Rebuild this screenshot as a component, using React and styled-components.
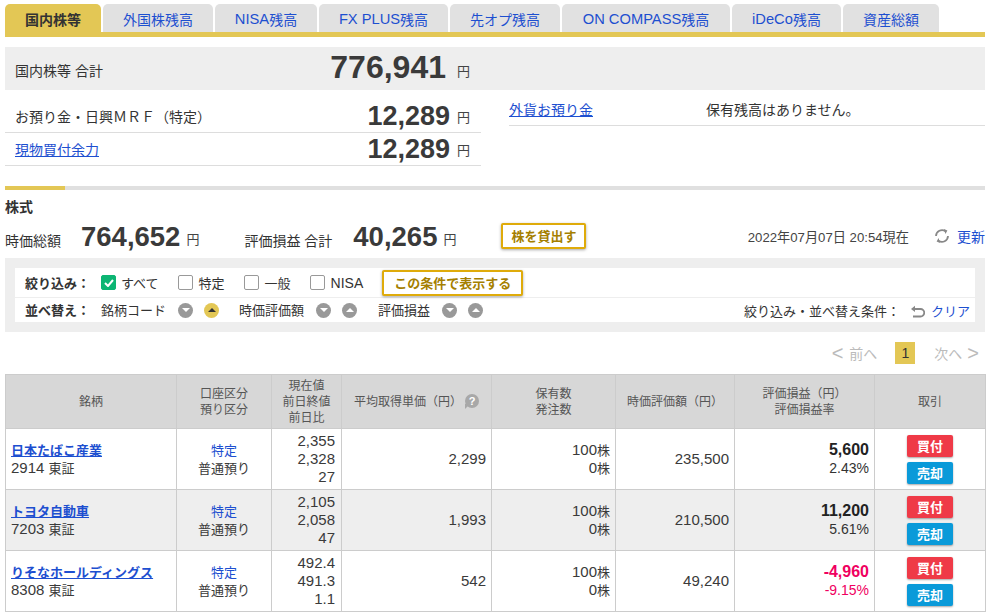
import React from "react";
import styled, { createGlobalStyle } from "styled-components";

const Global = createGlobalStyle`
  html, body { margin: 0; padding: 0; background: #fff; overflow: hidden; height: 616px; }
  body { font-family: "Liberation Sans", "Noto Sans CJK JP", sans-serif; font-size: 14px; color: #333; }
  * { box-sizing: border-box; }
`;

const Page = styled.div`
  width: 992px; height: 616px; overflow: hidden; padding: 4px 7px 0 5px;
`;

const TabBar = styled.nav`
  display: flex; gap: 2px; height: 33px; border-bottom: 5px solid #e3c755;
`;
const Tab = styled.a`
  display: flex; align-items: center; justify-content: center;
  width: ${p => p.$w}px; height: 28px; border-radius: 5px 5px 0 0;
  font-size: 14px; padding-top: 1px;
  background: ${p => (p.$active ? "#e3c755" : "#e1e1e1")};
  color: ${p => (p.$active ? "#333" : "#1d4fd0")};
  font-weight: ${p => (p.$active ? 700 : 400)};
`;
const TabLatin = styled.span`font-size: 14.7px;`;

const TotalBand = styled.section`
  display: flex; align-items: center; height: 43px; margin-top: 10px; padding: 0 515px 4px 10px;
  background: #eee;
`;
const Grow = styled.div`flex: 1;`;
const Amount = styled.b`
  font-size: ${p => p.$size || 27}px; font-weight: 700; color: #3a3a3a; line-height: 1;
`;
const Yen = styled.span`
  font-size: 13px; margin-left: ${p => p.$gap || 7}px; padding-top: ${p => p.$drop}px; line-height: 18px; color: #444;
`;
const TotalLabel = styled.span`font-size: 14px; padding-top: 6px;`;
const AmountGroup = styled.div`display: flex; align-items: center;`;

const Balances = styled.div`
  display: flex; gap: 28px; height: 96px;
`;
const BalanceCol = styled.div`width: 476px; padding-top: 10px;`;
const BalanceRow = styled.div`
  display: flex; align-items: center; justify-content: space-between;
  height: 33px; padding: 0 11px 0 10px; border-bottom: 1px solid #ddd;
`;
const ForeignRow = styled.div`
  display: flex; align-items: center; height: 27px; border-bottom: 1px solid #ddd; margin-top: -1px; padding-bottom: 6px;
`;
const TextLink = styled.a`color: #1d4fd0; text-decoration: underline;`;
const ForeignLabel = styled.div`width: 197px;`;

const SectionRule = styled.div`
  height: 4px; background: #e0e0e0;
  &::before { content: ""; display: block; width: 60px; height: 4px; background: #e3c755; }
`;
const SectionTitle = styled.h2`
  margin: 9px 0 0; font-size: 14px; line-height: 16px; font-weight: 700; color: #333;
`;
const Summary = styled.div`
  display: flex; align-items: center; height: 28px; margin-top: 8px;
`;
const SummaryLabel = styled.span`font-size: 14px; margin-left: ${p => p.$before || 0}px; margin-right: ${p => p.$after}px; padding-top: 6px;`;
const GoldButton = styled.button`
  display: inline-flex; align-items: center; justify-content: center;
  width: ${p => p.$w}px; height: 26px; padding: 0; flex: none;
  margin-left: ${p => p.$before || 0}px; margin-top: ${p => (p.$lift ? -3 : 0)}px;
  background: #fff; border: 2px solid #dfab0a; border-radius: 2px;
  box-shadow: 0 1px 3px rgba(0,0,0,.35);
  color: #a57f00; font: 700 13px "Liberation Sans", "Noto Sans CJK JP", sans-serif;
`;
const Stamp = styled.span`font-size: 13.2px; color: #444; margin-left: auto; margin-right: 25px; position: relative; top: -1px;`;
const Refresh = styled.a`display: flex; align-items: center; gap: 7px; color: #1d4fd0; font-size: 14px; position: relative; top: -1px;`;

const FilterPanel = styled.section`
  margin-top: 7px; padding: 10px; height: 74px; background: #eee;
`;
const FilterInner = styled.div`background: #fff; height: 54px;`;
const FilterRow = styled.div`
  display: flex; align-items: center; height: ${p => p.$h}px; padding: 0 5px 0 10px;
  font-size: 13px;
  ${p => p.$top && "border-bottom: 1px solid #eee;"}
`;
const FilterLabel = styled.b`
  width: 76px; font-weight: 700; font-size: 13px; flex: none; position: relative; top: ${p => (p.$lift ? -1 : 0)}px;
`;
const Check = styled.label`
  display: flex; align-items: center; gap: ${p => (p.$first ? 5 : 6)}px; margin-right: 19px;
`;
const CheckLatin = styled.span`font-size: 14px;`;
const Box = styled.span`
  display: flex; align-items: center; justify-content: center;
  width: 15px; height: 15px; border-radius: 2px;
  background: ${p => (p.$on ? "#0cb573" : "#fff")};
  border: 1px solid ${p => (p.$on ? "#0cb573" : "#999")};
`;
const SortName = styled.span`margin-right: 12px; position: relative; top: -1px;`;
const SortDot = styled.span`
  display: flex; align-items: center; justify-content: center; flex: none;
  width: 15px; height: 15px; border-radius: 50%; margin-right: ${p => p.$gap}px;
  background: ${p => (p.$on ? "#e3c755" : "#999")};
  &::after {
    content: ""; width: 0; height: 0; border-left: 4px solid transparent; border-right: 4px solid transparent;
    ${p => p.$up
      ? `border-bottom: 4px solid ${p.$on ? "#333" : "#fff"};`
      : "border-top: 4px solid #fff;"}
  }
`;
const ClearWrap = styled.div`
  margin-left: auto; display: flex; align-items: center;
`;
const ClearLabel = styled.span`margin-right: 10px;`;
const UndoSlot = styled.span`display: flex; margin: 3px 6px 0 0;`;
const BlueText = styled.a`color: #1d4fd0;`;

const Pager = styled.div`
  display: flex; align-items: center; justify-content: flex-end; height: 22px; margin-top: 10px;
  padding-right: 6px; color: #bbb; font-size: 14px;
`;
const Chevron = styled.span`
  font-size: 20px; font-weight: 400; line-height: 1; margin: ${p => (p.$next ? "0 0 0 5px" : "0 6px 0 0")};
`;
const PageNo = styled.span`
  display: flex; align-items: center; justify-content: center; width: 20px; height: 22px;
  margin: 0 19px 0 18px; background: #e3c755; color: #333;
`;

const Table = styled.table`
  width: 980px; margin-top: 10px; border-collapse: collapse; table-layout: fixed;
`;
const Th = styled.th`
  height: 54px; padding: 0; border: 1px solid #ccc; background: #d7d7d7;
  font-size: 12px; font-weight: 400; line-height: 16px; color: #555; text-align: center;
`;
const Row = styled.tr`background: ${p => (p.$alt ? "#eee" : "#fff")};`;
const Td = styled.td`
  height: 61px; padding: 0 ${p => p.$pr || 5}px 0 5px; border: 1px solid #ccc;
  text-align: ${p => p.$align || "right"}; font-size: 15px; color: #3a3a3a;
  vertical-align: middle;
`;
const Line = styled.div`height: 18px; line-height: 18px; white-space: nowrap;`;
const Ja = styled.span`font-size: 13px;`;
const StockName = styled.a`color: #1d4fd0; font-size: 13px; font-weight: 700; text-decoration: underline;`;
const Kind = styled.span`color: #1d4fd0; font-size: 13px;`;
const Gain = styled.b`
  font-weight: 700; font-size: 16px; color: ${p => (p.$neg ? "#f0005f" : "#222")};
`;
const Rate = styled.span`font-size: 14px; color: ${p => (p.$neg ? "#f0005f" : "#333")};`;
const Trade = styled.button`
  display: block; width: 46px; height: 22px; margin: 0 auto; padding: 0; border: 0; border-radius: 2px;
  background: ${p => (p.$sell ? "#0a9ad9" : "#ef3a47")}; color: #fff;
  box-shadow: 0 1px 2px rgba(0,0,0,.35);
  font: 700 13px "Liberation Sans", "Noto Sans CJK JP", sans-serif;
  & + & { margin-top: 5px; }
`;
const HelpBadge = styled.span`
  display: inline-flex; align-items: center; justify-content: center; position: relative;
  width: 14px; height: 14px; margin-left: 3px; border-radius: 50%;
  background: #a8a8a8; color: #fff; font-size: 11px; font-weight: 700; vertical-align: 1px;
  &::after { content: ""; position: absolute; left: 0; bottom: -1px; width: 0; height: 0;
    border-top: 5px solid #a8a8a8; border-right: 5px solid transparent; }
`;

const tabs = [
  [<>国内株等</>, 96, true], [<>外国株残高</>, 110], [<><TabLatin>NISA</TabLatin>残高</>, 102], [<><TabLatin>FX PLUS</TabLatin>残高</>, 129],
  [<>先オプ残高</>, 110], [<><TabLatin>ON COMPASS</TabLatin>残高</>, 168], [<><TabLatin>iDeCo</TabLatin>残高</>, 109], [<>資産総額</>, 96],
];
const stocks = [
  { name: "日本たばこ産業", code: "2914", p: ["2,355", "2,328", "27"], avg: "2,299", val: "235,500", gain: "5,600", rate: "2.43%" },
  { name: "トヨタ自動車", code: "7203", p: ["2,105", "2,058", "47"], avg: "1,993", val: "210,500", gain: "11,200", rate: "5.61%", alt: true },
  { name: "りそなホールディングス", code: "8308", p: ["492.4", "491.3", "1.1"], avg: "542", val: "49,240", gain: "-4,960", rate: "-9.15%", neg: true },
];

const RefreshIcon = () => (
  <svg width="16" height="16" viewBox="0 0 16 16" fill="none" stroke="#888" strokeWidth="1.8">
    <path d="M2 8a6 6 0 0 1 9.5-4.7" />
    <path d="M14 8a6 6 0 0 1-9.5 4.7" />
    <path d="M10 1l3.4 1.4L11.4 6z" fill="#888" stroke="none" />
    <path d="M6 15l-3.4-1.4L4.6 10z" fill="#888" stroke="none" />
  </svg>
);
const UndoIcon = () => (
  <svg width="15" height="14" viewBox="0 0 15 14" fill="none" stroke="#888" strokeWidth="1.8">
    <path d="M3 4h7.5a3.6 3.6 0 0 1 0 7.5H3" />
    <path d="M5 0.8L1 4l4 3z" fill="#888" stroke="none" />
  </svg>
);

export default function App() {
  return (
    <Page>
      <Global />
      <TabBar>
        {tabs.map(([t, w, a], i) => <Tab key={i} $w={w} $active={a}>{t}</Tab>)}
      </TabBar>

      <TotalBand>
        <TotalLabel>国内株等 合計</TotalLabel>
        <Grow />
        <AmountGroup><Amount $size={32}>776,941</Amount><Yen $gap={11} $drop={10}>円</Yen></AmountGroup>
      </TotalBand>

      <Balances>
        <BalanceCol>
          <BalanceRow>
            <span>お預り金・日興ＭＲＦ（特定）</span>
            <AmountGroup><Amount>12,289</Amount><Yen $drop={4}>円</Yen></AmountGroup>
          </BalanceRow>
          <BalanceRow>
            <TextLink>現物買付余力</TextLink>
            <AmountGroup><Amount>12,289</Amount><Yen $drop={4}>円</Yen></AmountGroup>
          </BalanceRow>
        </BalanceCol>
        <BalanceCol>
          <ForeignRow>
            <ForeignLabel><TextLink>外貨お預り金</TextLink></ForeignLabel>
            <span>保有残高はありません。</span>
          </ForeignRow>
        </BalanceCol>
      </Balances>

      <SectionRule />
      <SectionTitle>株式</SectionTitle>
      <Summary>
        <SummaryLabel $after={20}>時価総額</SummaryLabel>
        <AmountGroup><Amount $size={27.5}>764,652</Amount><Yen $gap={6} $drop={6}>円</Yen></AmountGroup>
        <SummaryLabel $before={45} $after={21}>評価損益 合計</SummaryLabel>
        <AmountGroup><Amount $size={27.5}>40,265</Amount><Yen $gap={6} $drop={6}>円</Yen></AmountGroup>
        <GoldButton $w={85} $before={45} $lift>株を貸出す</GoldButton>
        <Stamp>2022年07月07日 20:54現在</Stamp>
        <Refresh><RefreshIcon />更新</Refresh>
      </Summary>

      <FilterPanel>
        <FilterInner>
          <FilterRow $h={30} $top>
            <FilterLabel>絞り込み：</FilterLabel>
            <Check $first>
              <Box $on>
                <svg width="10" height="8" viewBox="0 0 10 8" fill="none" stroke="#fff" strokeWidth="2"><path d="M1 4l3 3 5-6" /></svg>
              </Box>
              すべて
            </Check>
            <Check><Box />特定</Check>
            <Check><Box />一般</Check>
            <Check><Box /><CheckLatin>NISA</CheckLatin></Check>
            <GoldButton $w={141}>この条件で表示する</GoldButton>
          </FilterRow>
          <FilterRow $h={24}>
            <FilterLabel $lift>並べ替え：</FilterLabel>
            <SortName>銘柄コード</SortName>
            <SortDot $gap={11} />
            <SortDot $up $on $gap={20} />
            <SortName>時価評価額</SortName>
            <SortDot $gap={11} />
            <SortDot $up $gap={21} />
            <SortName>評価損益</SortName>
            <SortDot $gap={11} />
            <SortDot $up $gap={0} />
            <ClearWrap>
              <ClearLabel>絞り込み・並べ替え条件：</ClearLabel>
              <UndoSlot><UndoIcon /></UndoSlot>
              <BlueText>クリア</BlueText>
            </ClearWrap>
          </FilterRow>
        </FilterInner>
      </FilterPanel>

      <Pager>
        <Chevron>&lt;</Chevron>前へ
        <PageNo>1</PageNo>
        次へ<Chevron $next>&gt;</Chevron>
      </Pager>

      <Table>
        <colgroup>
          {[171, 95, 70, 150, 124, 119, 140, 111].map((w, i) => <col key={i} width={w} />)}
        </colgroup>
        <thead>
          <tr>
            <Th>銘柄</Th>
            <Th>口座区分<br />預り区分</Th>
            <Th>現在値<br />前日終値<br />前日比</Th>
            <Th>平均取得単価（円）<HelpBadge>?</HelpBadge></Th>
            <Th>保有数<br />発注数</Th>
            <Th>時価評価額（円）</Th>
            <Th>評価損益（円）<br />評価損益率</Th>
            <Th>取引</Th>
          </tr>
        </thead>
        <tbody>
          {stocks.map(s => (
            <Row key={s.code} $alt={s.alt}>
              <Td $align="left">
                <Line><StockName>{s.name}</StockName></Line>
                <Line>{s.code} <Ja>東証</Ja></Line>
              </Td>
              <Td $align="center">
                <Line><Kind>特定</Kind></Line>
                <Line><Ja>普通預り</Ja></Line>
              </Td>
              <Td $pr={6}>{s.p.map(x => <Line key={x}>{x}</Line>)}</Td>
              <Td><Line>{s.avg}</Line></Td>
              <Td>
                <Line>100<Ja>株</Ja></Line>
                <Line>0<Ja>株</Ja></Line>
              </Td>
              <Td><Line>{s.val}</Line></Td>
              <Td>
                <Line><Gain $neg={s.neg}>{s.gain}</Gain></Line>
                <Line><Rate $neg={s.neg}>{s.rate}</Rate></Line>
              </Td>
              <Td $align="center"><Trade>買付</Trade><Trade $sell>売却</Trade></Td>
            </Row>
          ))}
        </tbody>
      </Table>
    </Page>
  );
}
